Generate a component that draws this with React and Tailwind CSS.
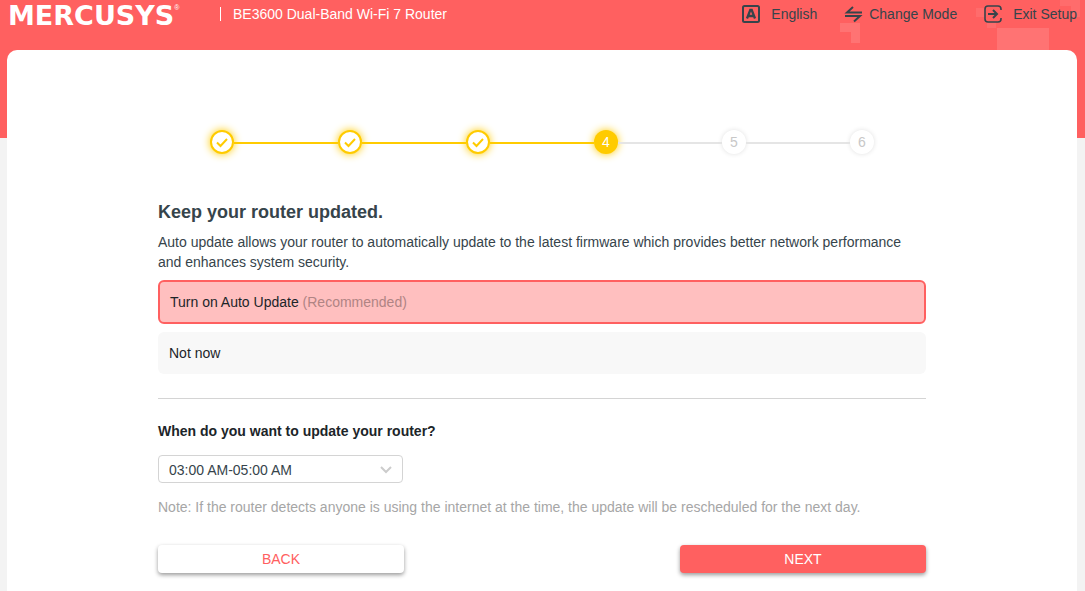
import React, { useState } from 'react';

const STEPS = [1, 2, 3, 4, 5, 6];
const CURRENT_STEP = 4;

const LanguageIcon = () => (
  <svg className="w-5 h-5" viewBox="0 0 20 20" fill="none" stroke="currentColor" strokeWidth={2}>
    <rect x="2" y="2" width="16" height="16" rx="1.5" />
    <path d="M6 14.5 9.3 6h1.4l3.3 8.5M7.3 12h5.4" strokeWidth={2.3} />
  </svg>
);

const ModeIcon = () => (
  <svg className="-mr-1 w-5 h-5" viewBox="0 0 20 20" fill="none" stroke="currentColor" strokeWidth={2}>
    <path d="M19 8.5H4L10 3M2 12h15l-6 5.5" />
  </svg>
);

const ExitIcon = () => (
  <svg className="w-5 h-5" viewBox="0 0 20 20" fill="none" stroke="currentColor" strokeWidth={2}>
    <path d="M18 6V5a3 3 0 0 0-3-3H5a3 3 0 0 0-3 3v10a3 3 0 0 0 3 3h10a3 3 0 0 0 3-3v-1" strokeWidth={1.6} />
    <path d="M5 10h9M10 6l4 4-4 4" />
  </svg>
);

const HeaderPattern = () => (
  <svg
    className="absolute top-0 right-0 w-[250px] h-[50px]"
    viewBox="0 0 250 50"
    fill="#ffffff"
    fillOpacity={0.12}
    aria-hidden="true"
  >
    <path d="M5 23h20v20h-9V32H5z" />
    <path d="M162 28h52v22h-52z" />
    <path d="M141 8h9v9h-9zM152 22h9v6h-9zM225 0h20v17h-9V6h-11z" fillOpacity={0.08} />
  </svg>
);

const HeaderLink = ({ icon, children }) => (
  <a href="#" className="flex items-center gap-[10px]">
    {icon}
    {children}
  </a>
);

const Header = () => (
  <header className="relative h-[50px]">
    <HeaderPattern />
    <div className="relative flex items-start justify-between px-2 leading-7">
      <div className="flex items-start text-white">
        <div className="flex w-[212px] items-start">
          <span className="font-['DejaVu_Sans',sans-serif] text-[27px] leading-8 font-bold">MERCUSYS</span>
          <span className="text-[7px] leading-4">®</span>
        </div>
        <span className="mt-[7px] h-[14px] w-px bg-white" />
        <span className="ml-3">BE3600 Dual-Band Wi-Fi 7 Router</span>
      </div>
      <nav className="flex gap-[26px] text-[#36444b]">
        <HeaderLink icon={<LanguageIcon />}>English</HeaderLink>
        <HeaderLink icon={<ModeIcon />}>Change Mode</HeaderLink>
        <HeaderLink icon={<ExitIcon />}>Exit Setup</HeaderLink>
      </nav>
    </div>
  </header>
);

const StepCircle = ({ step }) => {
  if (step < CURRENT_STEP) {
    return (
      <span className="flex size-6 items-center justify-center rounded-full border-2 border-[#ffcb00] bg-white text-[#ffcb00] shadow-[0_0_8px_#ffcb00]">
        <svg className="size-4" viewBox="0 0 16 16" fill="none" stroke="currentColor" strokeWidth={2}>
          <path d="m3 8.5 3.5 3.5L13 5" />
        </svg>
      </span>
    );
  }

  if (step === CURRENT_STEP) {
    return (
      <span className="flex size-6 items-center justify-center rounded-full bg-[#ffcb00] text-white shadow-[0_0_8px_#ffcb00]">
        {step}
      </span>
    );
  }

  return (
    <span className="flex size-6 items-center justify-center rounded-full bg-white text-[#c8c8c8] shadow-[0_0_5px_#e0e0e0]">
      {step}
    </span>
  );
};

const Stepper = () => (
  <ol className="mx-[52px] flex items-center">
    {STEPS.map((step) => (
      <li key={step} className={step === 1 ? 'flex items-center' : 'flex flex-1 items-center'}>
        {step > 1 && (
          <span
            className={
              step <= CURRENT_STEP ? 'mt-[2px] h-[2px] flex-1 bg-[#ffcb00]' : 'mt-[2px] h-[2px] flex-1 bg-[#e5e5e5]'
            }
          />
        )}
        <StepCircle step={step} />
      </li>
    ))}
  </ol>
);

const UpdateOption = ({ selected, onSelect, children }) => (
  <label
    className={
      selected
        ? 'flex h-11 items-center rounded-md border-2 border-[#ff6060] bg-[#ffbfbf] px-[10px]'
        : 'flex h-[42px] items-center rounded-md bg-[#f8f8f8] px-[11px]'
    }
  >
    <input type="radio" name="autoUpdate" className="sr-only" checked={selected} onChange={onSelect} />
    <span>{children}</span>
  </label>
);

export default function App() {
  const [autoUpdate, setAutoUpdate] = useState(true);

  return (
    <div className="relative flex min-h-screen flex-col bg-[linear-gradient(#ff6060_138px,#f3f3f3_138px)] font-['Liberation_Sans',Arial,sans-serif] text-sm text-[#36444b]">
      <Header />
      <main className="mr-2 ml-[7px] flex-1 rounded-t-[10px] bg-white pt-20">
        <div className="mx-auto w-full max-w-[768px]">
          <Stepper />

          <h1 className="mt-[46px] text-lg leading-6 font-bold">Keep your router updated.</h1>
          <p className="mt-2 leading-5">
            Auto update allows your router to automatically update to the latest firmware which provides better network
            performance and enhances system security.
          </p>

          <div className="mt-2 flex flex-col gap-2 text-[#1c2529]">
            <UpdateOption selected={autoUpdate} onSelect={() => setAutoUpdate(true)}>
              Turn on Auto Update <span className="text-[#b08484]">(Recommended)</span>
            </UpdateOption>
            <UpdateOption selected={!autoUpdate} onSelect={() => setAutoUpdate(false)}>
              Not now
            </UpdateOption>
          </div>

          <hr className="mt-6 border-[#d4d4d4]" />

          <label htmlFor="updateTime" className="mt-[22px] block leading-5 font-bold text-[#1c2529]">
            When do you want to update your router?
          </label>
          <div className="relative mt-[14px] w-[245px]">
            <select
              id="updateTime"
              className="h-7 w-full appearance-none rounded border border-[#d4d4d4] bg-white px-[10px] pt-[2px]"
            >
              <option>03:00 AM-05:00 AM</option>
              <option>01:00 AM-03:00 AM</option>
              <option>05:00 AM-07:00 AM</option>
            </select>
            <svg
              className="pointer-events-none absolute top-2 right-[11px] h-3 w-3"
              viewBox="0 0 12 12"
              fill="none"
              stroke="#cccccc"
              strokeWidth={2}
            >
              <path d="m1 4 5 5 5-5" />
            </svg>
          </div>
          <p className="mt-[14px] leading-5 text-[#a6a6a6]">
            Note: If the router detects anyone is using the internet at the time, the update will be rescheduled for the
            next day.
          </p>

          <div className="mt-7 flex justify-between pb-4">
            <button className="h-7 w-[246px] rounded bg-white text-[#ff6060] shadow-[0_2px_4px_rgba(0,0,0,0.4)]">
              BACK
            </button>
            <button className="h-7 w-[246px] rounded bg-[#ff6060] text-white shadow-[0_2px_4px_rgba(0,0,0,0.4)]">
              NEXT
            </button>
          </div>
        </div>
      </main>
    </div>
  );
}
